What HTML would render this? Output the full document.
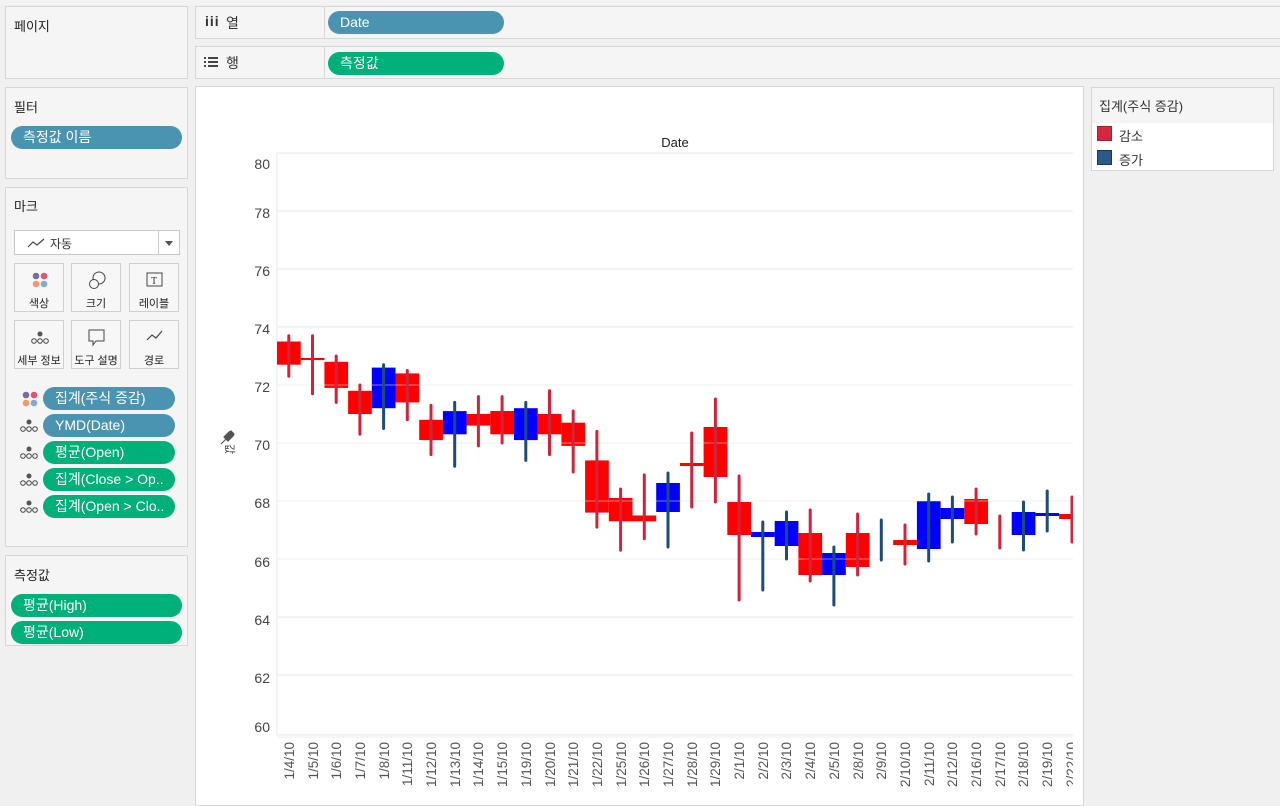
<!DOCTYPE html>
<html><head><meta charset="utf-8">
<style>
*{box-sizing:border-box;margin:0;padding:0}
body{width:1280px;height:804px;overflow:hidden;background:#f0f0f0;font-family:"Liberation Sans","Noto Sans CJK KR",sans-serif;font-size:13px;color:#333;position:relative}
.card{position:absolute;background:#f5f5f5;border:1px solid #d6d6d6}
.ttl{position:absolute;left:8px;font-size:13px;color:#222}
.pill{position:absolute;border-radius:12px;color:#fff;font-size:14px;padding-left:12px;line-height:23px;height:23px}
.b{background:#4a94b2}.g{background:#00b07b}
.mk{position:absolute;width:50px;height:49px;background:#f7f7f7;border:1px solid #cfcfcf;font-size:11px;text-align:center;color:#222}
.mk span{position:absolute;left:0;right:0;top:31px}
.mk svg{position:absolute;left:15px;top:7px}
.ic{position:absolute;left:19px}
</style></head><body>
<div style="position:absolute;left:0;top:0;width:1280px;height:5px;background:#f3f3f3"></div>
<!-- pages -->
<div class="card" style="left:5px;top:6px;width:183px;height:73px"><div class="ttl" style="top:9px">페이지</div></div>
<!-- shelves -->
<div class="card" style="left:195px;top:6px;width:1090px;height:33px">
 <div style="position:absolute;left:128px;top:0;bottom:0;border-left:1px solid #d6d6d6"></div>
 <div style="position:absolute;left:9px;top:6px;font-size:14px;font-weight:bold;color:#333;letter-spacing:1px">iii</div>
 <div style="position:absolute;left:30px;top:6px;font-size:14px">열</div>
 <div class="pill b" style="left:132px;top:4px;width:176px">Date</div>
</div>
<div class="card" style="left:195px;top:46px;width:1090px;height:33px">
 <div style="position:absolute;left:128px;top:0;bottom:0;border-left:1px solid #d6d6d6"></div>
 <svg style="position:absolute;left:8px;top:9px" width="14" height="12"><g fill="#444"><rect x="0" y="1" width="2" height="2"/><rect x="0" y="5" width="2" height="2"/><rect x="0" y="9" width="2" height="2"/><rect x="4" y="1" width="10" height="2"/><rect x="4" y="5" width="10" height="2"/><rect x="4" y="9" width="10" height="2"/></g></svg>
 <div style="position:absolute;left:30px;top:6px;font-size:14px">행</div>
 <div class="pill g" style="left:132px;top:5px;width:176px">측정값</div>
</div>
<!-- filter -->
<div class="card" style="left:5px;top:87px;width:183px;height:92px"><div class="ttl" style="top:9px">필터</div>
 <div class="pill b" style="left:5px;top:38px;width:171px">측정값 이름</div></div>
<!-- marks -->
<div class="card" style="left:5px;top:187px;width:183px;height:360px"><div class="ttl" style="top:8px">마크</div>
 <div style="position:absolute;left:8px;top:42px;width:166px;height:25px;background:#fff;border:1px solid #c8c8c8">
  <svg style="position:absolute;left:12px;top:7px" width="18" height="10"><polyline points="1,9 6,4 10,7 17,1" fill="none" stroke="#444" stroke-width="1.2"/></svg>
  <span style="position:absolute;left:35px;top:4px;font-size:12px">자동</span>
  <div style="position:absolute;left:143px;top:0;bottom:0;border-left:1px solid #ccc"></div>
  <div style="position:absolute;left:150px;top:10px;border-left:4px solid transparent;border-right:4px solid transparent;border-top:5px solid #555"></div>
 </div>
 <div class="mk" style="left:8px;top:75px"><svg width="20" height="20"><circle cx="6" cy="5" r="3.3" fill="#7b6a9c"/><circle cx="14" cy="5" r="3.3" fill="#e0566a"/><circle cx="6" cy="13" r="3.3" fill="#ef9a6a"/><circle cx="14" cy="13" r="3.3" fill="#86a8d6"/></svg><span>색상</span></div>
 <div class="mk" style="left:65px;top:75px"><svg width="20" height="20"><circle cx="12" cy="7" r="6" fill="none" stroke="#444"/><circle cx="7" cy="13" r="4.5" fill="#f7f7f7" stroke="#444"/></svg><span>크기</span></div>
 <div class="mk" style="left:123px;top:75px"><svg width="20" height="20"><rect x="2" y="2" width="15" height="13" fill="none" stroke="#444"/><text x="6" y="13" font-size="10" font-family="Liberation Serif" fill="#333">T</text></svg><span>레이블</span></div>
 <div class="mk" style="left:8px;top:132px"><svg width="22" height="20"><g fill="none" stroke="#444"><circle cx="4" cy="13" r="2.3"/><circle cx="10" cy="13" r="2.3"/><circle cx="16" cy="13" r="2.3"/></g><circle cx="10" cy="6" r="2.5" fill="#555"/></svg><span>세부 정보</span></div>
 <div class="mk" style="left:65px;top:132px"><svg width="20" height="20"><path d="M2 2h15v11h-8l-3 4v-4h-4z" fill="none" stroke="#444"/></svg><span>도구 설명</span></div>
 <div class="mk" style="left:123px;top:132px"><svg width="20" height="20"><polyline points="2,12 7,7 11,10 17,3" fill="none" stroke="#444" stroke-width="1.2"/></svg><span>경로</span></div>
 <svg class="ic" style="left:15px;top:202px" width="20" height="20"><circle cx="5" cy="5" r="3.3" fill="#7b6a9c"/><circle cx="13" cy="5" r="3.3" fill="#e0566a"/><circle cx="5" cy="13" r="3.3" fill="#ef9a6a"/><circle cx="13" cy="13" r="3.3" fill="#86a8d6"/></svg>
 <div class="pill b" style="left:37px;top:199px;width:132px">집계(주식 증감)</div>
 <svg class="ic" style="left:13px;top:228px" width="22" height="20"><g fill="none" stroke="#444"><circle cx="4" cy="13" r="2.3"/><circle cx="10" cy="13" r="2.3"/><circle cx="16" cy="13" r="2.3"/></g><circle cx="10" cy="6" r="2.5" fill="#555"/></svg>
 <div class="pill b" style="left:37px;top:226px;width:132px">YMD(Date)</div>
 <svg class="ic" style="left:13px;top:255px" width="22" height="20"><g fill="none" stroke="#444"><circle cx="4" cy="13" r="2.3"/><circle cx="10" cy="13" r="2.3"/><circle cx="16" cy="13" r="2.3"/></g><circle cx="10" cy="6" r="2.5" fill="#555"/></svg>
 <div class="pill g" style="left:37px;top:253px;width:132px">평균(Open)</div>
 <svg class="ic" style="left:13px;top:282px" width="22" height="20"><g fill="none" stroke="#444"><circle cx="4" cy="13" r="2.3"/><circle cx="10" cy="13" r="2.3"/><circle cx="16" cy="13" r="2.3"/></g><circle cx="10" cy="6" r="2.5" fill="#555"/></svg>
 <div class="pill g" style="left:37px;top:280px;width:132px">집계(Close &gt; Op..</div>
 <svg class="ic" style="left:13px;top:309px" width="22" height="20"><g fill="none" stroke="#444"><circle cx="4" cy="13" r="2.3"/><circle cx="10" cy="13" r="2.3"/><circle cx="16" cy="13" r="2.3"/></g><circle cx="10" cy="6" r="2.5" fill="#555"/></svg>
 <div class="pill g" style="left:37px;top:307px;width:132px">집계(Open &gt; Clo..</div>
</div>
<!-- measure values -->
<div class="card" style="left:5px;top:555px;width:183px;height:91px"><div class="ttl" style="top:9px">측정값</div>
 <div class="pill g" style="left:5px;top:38px;width:171px">평균(High)</div>
 <div class="pill g" style="left:5px;top:65px;width:171px">평균(Low)</div></div>
<!-- legend -->
<div class="card" style="left:1091px;top:87px;width:183px;height:84px;background:#fff">
 <div style="position:absolute;left:0;top:0;right:0;height:35px;background:#f5f5f5"></div>
 <div style="position:absolute;left:7px;top:8px;font-size:13px">집계(주식 증감)</div>
 <div style="position:absolute;left:5px;top:38px;width:15px;height:15px;background:#d6263f;border:1px solid #b01c32"></div>
 <div style="position:absolute;left:27px;top:38px;font-size:13px">감소</div>
 <div style="position:absolute;left:5px;top:62px;width:15px;height:15px;background:#2a5a8a;border:1px solid #17395c"></div>
 <div style="position:absolute;left:27px;top:62px;font-size:13px">증가</div>
</div>
<!-- chart -->
<div style="position:absolute;left:195px;top:86px;width:889px;height:720px;background:#fff;border:1px solid #d6d6d6"></div>
<svg style="position:absolute;left:0;top:0" width="1280" height="804">
 <defs><clipPath id="c"><rect x="277" y="140" width="796" height="600"/></clipPath><clipPath id="c2"><rect x="1060" y="740" width="13" height="64"/></clipPath></defs>
 <text x="675" y="147" font-size="13" text-anchor="middle" fill="#222" font-family="Liberation Sans">Date</text>
 <g stroke="#f0f0f0" stroke-width="1.5">
  <line x1="277" y1="153" x2="1073" y2="153"/><line x1="277" y1="211" x2="1073" y2="211"/><line x1="277" y1="269" x2="1073" y2="269"/><line x1="277" y1="327" x2="1073" y2="327"/><line x1="277" y1="385" x2="1073" y2="385"/><line x1="277" y1="443" x2="1073" y2="443"/><line x1="277" y1="501" x2="1073" y2="501"/><line x1="277" y1="559" x2="1073" y2="559"/><line x1="277" y1="617" x2="1073" y2="617"/><line x1="277" y1="675" x2="1073" y2="675"/><line x1="277" y1="735" x2="1073" y2="735"/><line x1="277" y1="153" x2="277" y2="735"/>
 </g>
 <g font-size="14" fill="#444" text-anchor="end" font-family="Liberation Sans">
  <text x="270" y="169">80</text><text x="270" y="218">78</text><text x="270" y="276">76</text><text x="270" y="334">74</text><text x="270" y="392">72</text><text x="270" y="450">70</text><text x="270" y="508">68</text><text x="270" y="567">66</text><text x="270" y="625">64</text><text x="270" y="683">62</text><text x="270" y="732">60</text>
 </g>
 <g transform="translate(224,431)"><path d="M0 6 L5 1 L7 0 L10 3 L9 5 L4 10 Z M2 8 L-3 13" fill="#555" stroke="#555" stroke-width="1.2"/></g>
 <text transform="translate(226,444) rotate(90)" font-size="11" fill="#444" font-family="Liberation Sans,Noto Sans CJK KR,sans-serif">값</text>
 <g clip-path="url(#c)" stroke-linecap="round">
 <g fill="#ff0000"><rect x="277" y="341.5" width="23.7" height="23.2"/><rect x="300.7" y="358" width="23.7" height="2"/><rect x="324.4" y="361.8" width="23.7" height="26.1"/><rect x="348.1" y="390.8" width="23.7" height="23.2"/><rect x="395.5" y="373.4" width="23.7" height="29"/><rect x="419.2" y="419.8" width="23.7" height="20.3"/><rect x="466.6" y="414" width="23.7" height="11.6"/><rect x="490.3" y="411" width="23.7" height="23.3"/><rect x="537.7" y="414" width="23.7" height="20.3"/><rect x="561.4" y="422.7" width="23.7" height="23.2"/><rect x="585.1" y="460.4" width="23.7" height="52.2"/><rect x="608.8" y="498" width="23.7" height="23.3"/><rect x="632.5" y="515.5" width="23.7" height="5.8"/><rect x="679.9" y="463" width="23.7" height="3"/><rect x="703.6" y="427" width="23.7" height="50"/><rect x="727.3" y="502" width="23.7" height="33"/><rect x="798.4" y="533" width="23.7" height="42"/><rect x="845.8" y="533" width="23.7" height="34"/><rect x="893.2" y="540" width="23.7" height="5"/><rect x="964.3" y="499" width="23.7" height="25"/><rect x="1059.1" y="514" width="23.7" height="5"/></g>
 <g fill="#0000ff"><rect x="371.8" y="367.6" width="23.7" height="40.6"/><rect x="442.9" y="411.1" width="23.7" height="23.2"/><rect x="514" y="408.2" width="23.7" height="31.9"/><rect x="656.2" y="483" width="23.7" height="29"/><rect x="751" y="532" width="23.7" height="5"/><rect x="774.7" y="521" width="23.7" height="25"/><rect x="822.1" y="553" width="23.7" height="22"/><rect x="916.9" y="501" width="23.7" height="48"/><rect x="940.6" y="508" width="23.7" height="11"/><rect x="1011.7" y="512" width="23.7" height="23"/><rect x="1035.4" y="513" width="23.7" height="3"/></g>
 <g stroke="#fff" stroke-width="1" opacity="0.8"><line x1="277" y1="385" x2="1073" y2="385" stroke-opacity="0.6"/><line x1="277" y1="443" x2="1073" y2="443" stroke-opacity="0.6"/><line x1="277" y1="501" x2="1073" y2="501" stroke-opacity="0.6"/><line x1="277" y1="559" x2="1073" y2="559" stroke-opacity="0.6"/></g>
 <g stroke="#d0243c" stroke-width="3"><line x1="288.8" y1="335.7" x2="288.8" y2="376.3"/><line x1="312.5" y1="335.7" x2="312.5" y2="393.7"/><line x1="336.2" y1="356" x2="336.2" y2="402.4"/><line x1="359.9" y1="385" x2="359.9" y2="434.3"/><line x1="407.3" y1="370.5" x2="407.3" y2="419.8"/><line x1="431" y1="405.3" x2="431" y2="454.6"/><line x1="478.4" y1="396.6" x2="478.4" y2="445.9"/><line x1="502.1" y1="396.6" x2="502.1" y2="443"/><line x1="549.5" y1="390.8" x2="549.5" y2="454.6"/><line x1="573.2" y1="411" x2="573.2" y2="472"/><line x1="596.9" y1="431.4" x2="596.9" y2="527.1"/><line x1="620.6" y1="489" x2="620.6" y2="550.3"/><line x1="644.3" y1="474.9" x2="644.3" y2="538.7"/><line x1="691.7" y1="433" x2="691.7" y2="507"/><line x1="715.4" y1="399" x2="715.4" y2="502"/><line x1="739.1" y1="476" x2="739.1" y2="600"/><line x1="810.2" y1="510" x2="810.2" y2="581"/><line x1="857.6" y1="514" x2="857.6" y2="575"/><line x1="905" y1="525" x2="905" y2="564"/><line x1="976.1" y1="489" x2="976.1" y2="534"/><line x1="999.8" y1="516" x2="999.8" y2="548"/><line x1="1072" y1="497" x2="1072" y2="542"/></g>
 <g stroke="#1f4b78" stroke-width="3"><line x1="383.6" y1="364.7" x2="383.6" y2="428.5"/><line x1="454.7" y1="402.4" x2="454.7" y2="466.2"/><line x1="525.8" y1="402.4" x2="525.8" y2="460.4"/><line x1="668" y1="473" x2="668" y2="547"/><line x1="762.8" y1="522" x2="762.8" y2="590"/><line x1="786.5" y1="512" x2="786.5" y2="559"/><line x1="833.9" y1="547" x2="833.9" y2="605"/><line x1="881.3" y1="520" x2="881.3" y2="560"/><line x1="928.7" y1="494" x2="928.7" y2="561"/><line x1="952.4" y1="497" x2="952.4" y2="542"/><line x1="1023.5" y1="502" x2="1023.5" y2="550"/><line x1="1047.2" y1="491" x2="1047.2" y2="531"/></g>
 </g>
 <g stroke="#eee"><line x1="277" y1="737" x2="1073" y2="737"/></g>
 <g font-size="13.5" fill="#555" text-anchor="end" font-family="Liberation Sans">
  <text transform="translate(294,742) rotate(-90)">1/4/10</text>
  <text transform="translate(318,742) rotate(-90)">1/5/10</text>
  <text transform="translate(341,742) rotate(-90)">1/6/10</text>
  <text transform="translate(365,742) rotate(-90)">1/7/10</text>
  <text transform="translate(389,742) rotate(-90)">1/8/10</text>
  <text transform="translate(412,742) rotate(-90)">1/11/10</text>
  <text transform="translate(436,742) rotate(-90)">1/12/10</text>
  <text transform="translate(460,742) rotate(-90)">1/13/10</text>
  <text transform="translate(483,742) rotate(-90)">1/14/10</text>
  <text transform="translate(507,742) rotate(-90)">1/15/10</text>
  <text transform="translate(531,742) rotate(-90)">1/19/10</text>
  <text transform="translate(555,742) rotate(-90)">1/20/10</text>
  <text transform="translate(578,742) rotate(-90)">1/21/10</text>
  <text transform="translate(602,742) rotate(-90)">1/22/10</text>
  <text transform="translate(626,742) rotate(-90)">1/25/10</text>
  <text transform="translate(649,742) rotate(-90)">1/26/10</text>
  <text transform="translate(673,742) rotate(-90)">1/27/10</text>
  <text transform="translate(697,742) rotate(-90)">1/28/10</text>
  <text transform="translate(720,742) rotate(-90)">1/29/10</text>
  <text transform="translate(744,742) rotate(-90)">2/1/10</text>
  <text transform="translate(768,742) rotate(-90)">2/2/10</text>
  <text transform="translate(791,742) rotate(-90)">2/3/10</text>
  <text transform="translate(815,742) rotate(-90)">2/4/10</text>
  <text transform="translate(839,742) rotate(-90)">2/5/10</text>
  <text transform="translate(863,742) rotate(-90)">2/8/10</text>
  <text transform="translate(886,742) rotate(-90)">2/9/10</text>
  <text transform="translate(910,742) rotate(-90)">2/10/10</text>
  <text transform="translate(934,742) rotate(-90)">2/11/10</text>
  <text transform="translate(957,742) rotate(-90)">2/12/10</text>
  <text transform="translate(981,742) rotate(-90)">2/16/10</text>
  <text transform="translate(1005,742) rotate(-90)">2/17/10</text>
  <text transform="translate(1028,742) rotate(-90)">2/18/10</text>
  <text transform="translate(1052,742) rotate(-90)">2/19/10</text>
 </g>
 <g clip-path="url(#c2)"><text transform="translate(1076,742) rotate(-90)" font-size="13.5" fill="#555" text-anchor="end" font-family="Liberation Sans">2/22/10</text></g>
</svg>
</body></html>
